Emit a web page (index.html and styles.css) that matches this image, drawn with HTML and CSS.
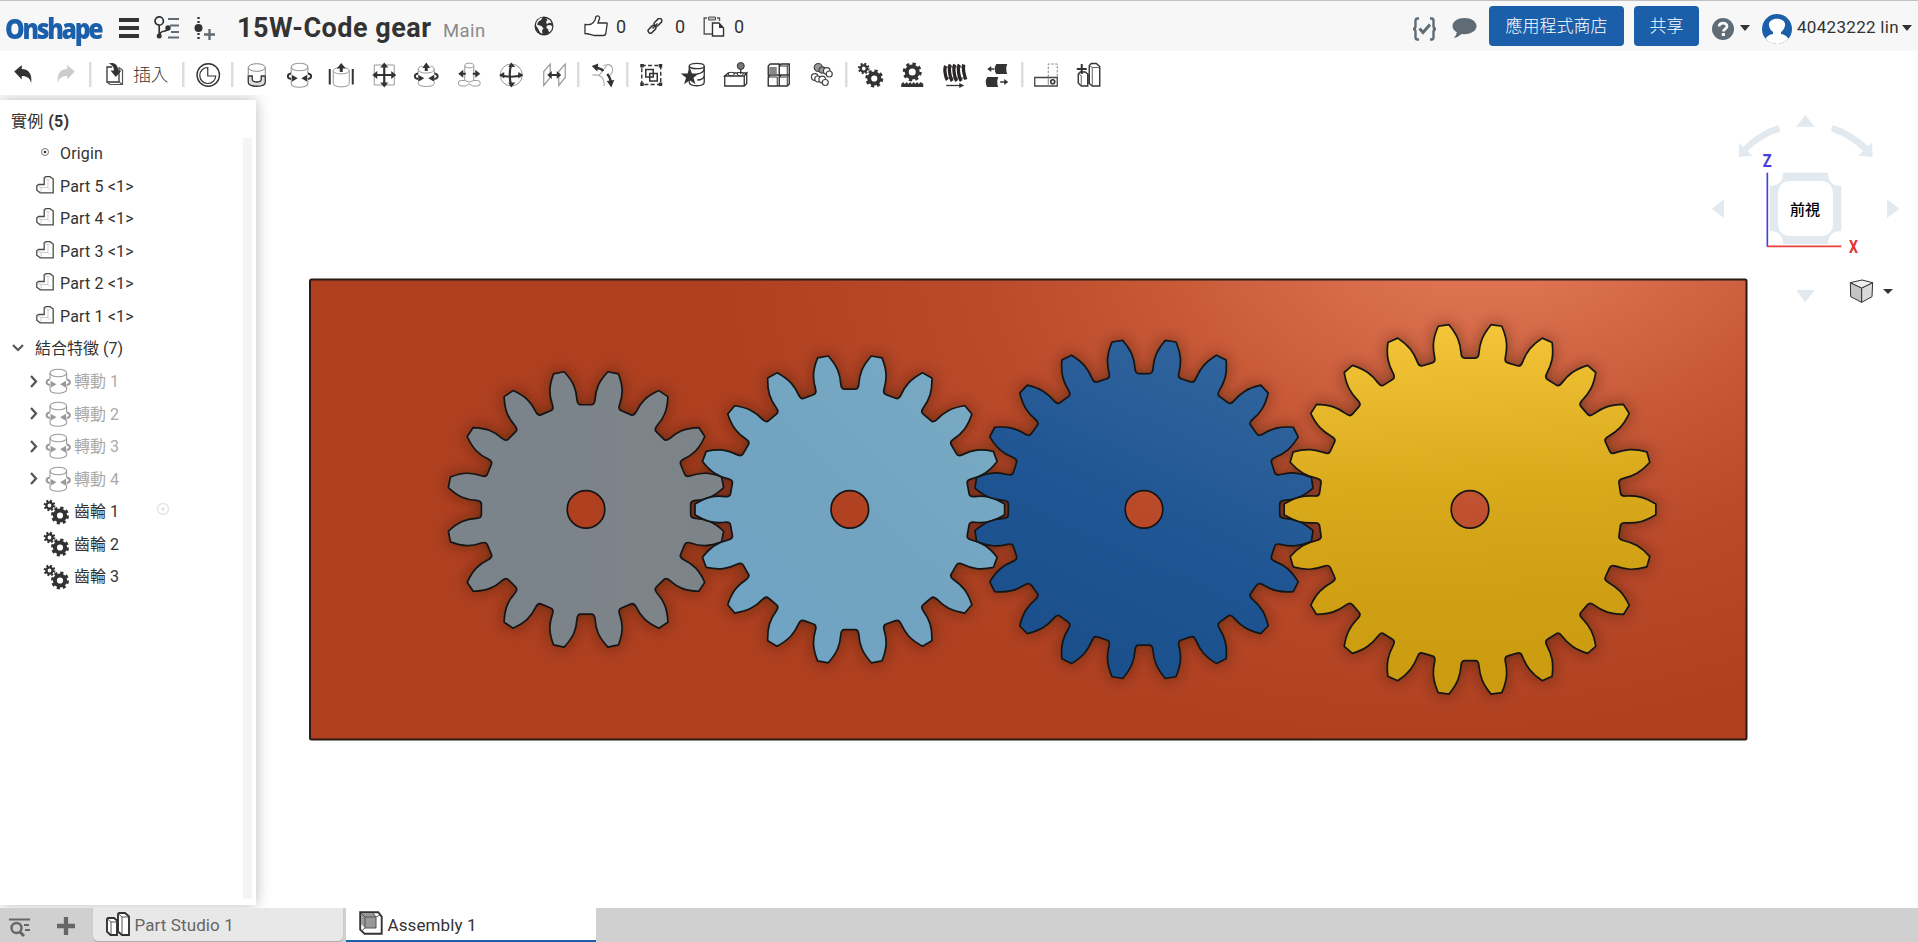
FILE: index.html
```html
<!DOCTYPE html>
<html lang="zh-Hant">
<head>
<meta charset="utf-8">
<title>15W-Code gear</title>
<link rel="stylesheet" href="styles.css">
</head>
<body>
<svg class="defs" width="0" height="0" aria-hidden="true">
  <symbol id="part" viewBox="0 0 18 18"><path d="M.8 9.700 2.500 8.500H8.200V1.800L9.800.7H14l3.200 2.300v13.800H4.200L.8 14.200z" fill="#fff" stroke="#4a4a4a" stroke-width="1.300"/><path d="M9 2l3 2v7.500H5L1.500 10M12 4l2-1M5 11.500V16M12 11.500l2.500 2.500" fill="none" stroke="#bbb" stroke-width=".7"/></symbol>
  <symbol id="revolve" viewBox="0 0 28 28"><g fill="none" stroke="#999" stroke-width="1.100"><ellipse cx="14.300" cy="6" rx="8.300" ry="3.800"/><path d="M6 6v6M22.600 6v6M6 19.500v3c0 5 16.600 5 16.600 0v-3"/></g><path d="M6 12.500c-4.500.5-4.500 5 0 5.500M22.500 12.500c4.500.5 4.500 5 0 5.500" fill="none" stroke="currentColor" stroke-width="2"/><path d="M6.500 13.800v7l6-3.500zM22 13.800v7l-6-3.500z" fill="currentColor"/></symbol>
  <symbol id="gearpair" viewBox="0 0 28 28"><g fill="none" stroke="currentColor"><circle cx="7.500" cy="7.500" r="3.100" stroke-width="2.400"/><circle cx="7.500" cy="7.500" r="4.700" stroke-width="2.300" stroke-dasharray="1.850 1.840"/><circle cx="18" cy="17.500" r="5.100" stroke-width="4"/><circle cx="18" cy="17.500" r="7.500" stroke-width="3" stroke-dasharray="3.100 2.790"/></g></symbol>
</svg>

<header class="header">
  <span class="logo">Onshape</span>
  <svg class="menu" viewBox="0 0 20 20"><path d="M0 2h20M0 10h20M0 18h20" stroke="#333" stroke-width="4"/></svg>
  <svg class="branch" viewBox="0 0 26 24"><path d="M14 3h11M16 9.500h9M17 16h8M14 21.500h11" stroke="#5f6b75" stroke-width="2.200"/><g fill="none" stroke="#333" stroke-width="1.700"><circle cx="5.200" cy="5" r="4.200"/><path d="M5.200 9v11M6 18.500c0-5 7.500-1.500 8-6"/></g><circle cx="5.200" cy="20" r="2.500" fill="#333"/><circle cx="14" cy="12" r="2.700" fill="#333"/></svg>
  <svg class="version" viewBox="0 0 22 24"><path d="M4.500 1v22" stroke="#333" stroke-width="2.300" stroke-dasharray="2 2"/><circle cx="4.500" cy="12" r="4" fill="#333"/><path d="M15.500 13v11M10 18.500h11" stroke="#5f6b75" stroke-width="2.300"/></svg>
  <h1 class="title">15W-Code gear</h1>
  <span class="workspace-name">Main</span>
  <svg class="globe" viewBox="0 0 20 20"><circle cx="10" cy="10" r="9.500" fill="#333"/><path d="M8.500 1.500 7 4 4.500 5.500 3 8.500l2.500 1 2 .5 2 2.500-1.500 2 .5 3.500-2.500-1.500-2-4L2 9.500C2 5 5 2 8.500 1.500zM12 2l4 2.200 1.500 3-2.500-.5-2 1.500-1-2.500 1.500-1.500zM13 9.500l3.500-.5 1.800 1.500-.8 3.500-2.500 2.500-1-3.500-1.800-1z" fill="#f7f7f7"/></svg>
  <svg class="thumb" viewBox="0 0 24 22"><path d="M1 9.500c5 .5 8 0 10-4.500l1-3.500c2-1.500 4 0 3.500 2L14 8h8.500c1 0 .8 1 .5 2l-1.200 8.500c-.3 1.500-1 2-2.500 2h-9C8 20.500 5 18.500 1 18.500z" fill="#fff" stroke="#333" stroke-width="1.300"/></svg>
  <span class="count count-like">0</span>
  <svg class="link" viewBox="0 0 16 16"><g fill="none" stroke="#333" stroke-width="1.500"><rect x="6.500" y="2" width="9" height="4.600" rx="2.300" transform="rotate(-45 11 4.300)"/><rect x=".5" y="9" width="9" height="4.600" rx="2.300" transform="rotate(-45 5 11.300)"/><path d="m5.500 10.500 5-5"/></g></svg>
  <span class="count count-link">0</span>
  <svg class="copy" viewBox="0 0 22 21"><path d="M9 18H1.200V2H4M14 2h2.500v3" fill="none" stroke="#555" stroke-width="1.400"/><path d="M5.500 1h7v3h-7z" fill="#bbb" stroke="#555"/><path d="M9.500 7h6.500l4.500 5v8h-11z" fill="#fff" stroke="#333" stroke-width="1.400"/><path d="M16 7v5h4.500z" fill="#333"/></svg>
  <span class="count">0</span>

  <div class="account">
    <svg class="braces" viewBox="0 0 25 24"><path d="M7 1.500H5.300Q3.500 1.500 3.500 4v5Q3.500 12 1 12q2.500 0 2.500 3v5q0 2.500 1.800 2.500H7M18 1.500h1.700q1.800 0 1.800 2.500v5q0 3 2.500 3-2.500 0-2.500 3v5q0 2.500-1.800 2.500H18" fill="none" stroke="#5f6b75" stroke-width="2.400"/><path d="m7.500 11.500 3.500 4 7-8" fill="none" stroke="#5f6b75" stroke-width="3"/></svg>
    <svg class="bubble" viewBox="0 0 26 22"><path d="M13 .5c7 0 12.500 3.600 12.500 8.500S20 17.500 13 17.500l-3-.2Q6.500 20.500 2 21.500q2.500-2.500 3-6Q.5 13 .5 9C.5 4 6 .5 13 .5z" fill="#5f6b75"/></svg>
    <button class="button store">應用程式商店</button>
    <button class="button share">共享</button>
    <svg class="help" viewBox="0 0 22 22"><circle cx="11" cy="11" r="11" fill="#5f6b75"/><path d="M7.200 8.500C7 4 15 4 15 8.200c0 2.500-3.600 2.700-3.600 5.300" fill="none" stroke="#f7f7f7" stroke-width="2.800"/><path d="M9.800 15h3.200v3H9.800z" fill="#f7f7f7"/></svg>
    <i class="caret"></i>
    <svg class="avatar" viewBox="0 0 30 30"><clipPath id="face"><circle cx="15" cy="15" r="15"/></clipPath><g clip-path="url(#face)"><path fill="#1b5faa" d="M0 0h30v30H0z"/><path d="M2 32c0-9 5-11.500 9-12V18C8 16 6.500 12 7 9.500 8.500 3 21.500 3 23 9.500c.5 2.500-1 6.500-4 8.500v2c4 .5 9 3 9 12z" fill="#fff"/></g></svg>
    <span class="user">40423222 lin</span>
    <i class="caret"></i>
  </div>
</header>

<nav class="toolbar">
  <svg class="tool" viewBox="0 0 28 28"><path d="M5 10.500 12.500 4v4c7 0 10.500 5 9.500 14-1.500-5-4-7-9.500-7v3.500z" fill="#333"/></svg>
  <svg class="tool" viewBox="0 0 28 28"><path d="M22.500 10.500 15 4v4c-7 0-10.500 5-9.500 14 1.500-5 4-7 9.500-7v3.500z" fill="#ccc"/></svg>
  <i class="sep"></i>
  <div class="insert">
    <svg viewBox="0 0 20 24"><path d="M7 5H2v15h12V5.500" fill="#fff" stroke="#333" stroke-width="1.300"/><path d="M14 5.500l3.500 2.500v14.500H5L2 20M14 20l3.500 2.500" fill="none" stroke="#555" stroke-width="1.200"/><path d="M3.500 1.500c5-2 10 1 9.500 7h3.500L10.800 15 5.500 8.500H9C9 5.500 7.500 3 3.500 1.500z" fill="#333"/></svg>
    <span>插入</span>
  </div>
  <i class="sep"></i>
  <svg class="tool" viewBox="0 0 28 28"><g fill="none" stroke="#333" stroke-width="1.400"><circle cx="14" cy="14" r="11.200"/><path d="M13.500 6.500A8 8 0 1 0 21.500 15h-8z" stroke-width="1.200"/></g></svg>
  <i class="sep"></i>
  <svg class="tool" viewBox="0 0 28 28"><path d="M6 15h4v3q0 3 4.500 3t4.500-3v-3h4v6.500c0 5-17 5-17 0z" fill="#ddd" stroke="#333" stroke-width="1.300"/><g fill="none" stroke="#888"><ellipse cx="14.500" cy="6.500" rx="8.500" ry="3.800"/><path d="M6 6.500V15M23 6.500V15"/></g></svg>
  <svg class="tool" viewBox="0 0 28 28"><use href="#revolve"/></svg>
  <svg class="tool" viewBox="0 0 28 28"><path d="M2.500 8v15.500M25.500 8v15.500" stroke="#333" stroke-width="2"/><g fill="none" stroke="#999"><path d="M11 6.700c-7 1-7 6 3 6.200 10-.2 10-5.200 3-6.200M6 9.500V22.500c0 4.500 16 4.500 16 0V9.500"/></g><path d="M14 2l4.500 5.500h-3V11h-3V7.500h-3z" fill="#333"/></svg>
  <svg class="tool" viewBox="0 0 28 28"><path d="M4 4h20v20H4z" fill="none" stroke="#999"/><path d="M14 4v20M4 14h20" stroke="#333" stroke-width="2.200"/><path d="m14 1.500 4 5h-8zM14 26.500l4-5h-8zM2 14l5-4v8zM26 14l-5-4v8z" fill="#333"/></svg>
  <svg class="tool" viewBox="0 0 28 28"><g fill="none" stroke="#999"><path d="M10 5C4 6 4 12 14 12s10-6 4-7M6.500 8l-1 4M21.500 8l1 4M6 21v1.500c0 4 16 4 16 0V21"/></g><path d="m14 1.500 4 5.500h-2.500v3h-3V7H10z" fill="#333"/><path d="M6 12.500c-4.500.5-4.500 5 0 5.500M22 12.500c4.500.5 4.500 5 0 5.500" fill="none" stroke="#333" stroke-width="2"/><path d="M6 13.800v7l6-3.500zM22 13.800v7l-6-3.500z" fill="#333"/></svg>
  <svg class="tool" viewBox="0 0 28 28"><g fill="none" stroke="#999"><ellipse cx="14" cy="4.500" rx="4.500" ry="2.300"/><path d="M9.500 4.500v15q4.500 3 9 0v-15M9.500 19.500H6q-3 0-3 2.700T6 25h5l2-2h2l2 2h5q3 0 3-2.800t-3-2.700h-3.500"/></g><path d="M7 12.700h3.500M17.500 12.700H21" stroke="#333" stroke-width="2"/><path d="m3 12.700 5-4v8zM25 12.700l-5-4v8z" fill="#333"/></svg>
  <svg class="tool" viewBox="0 0 28 28"><circle cx="14" cy="14" r="11" fill="none" stroke="#999"/><path d="M14 3q-3 11 0 22M3 14q11 3.500 22 0" fill="none" stroke="#333" stroke-width="2.200"/><path d="m14 1.500 4 4.500h-7zM14 26.500l4-5h-7zM2 14l5-3v6.500zM26 14l-5-3v6.500z" fill="#333"/></svg>
  <svg class="tool" viewBox="0 0 28 28"><path d="M3.500 10.500 10 3v13.500l-6.500 8zM18.500 10.500 25 3v13.500l-6.500 8z" fill="none" stroke="#999" stroke-width="1.200"/><path d="M9 14h10" stroke="#333" stroke-width="2"/><path d="m7 14 4.500-4v8zM21 14l-4.500-4v8z" fill="#333"/></svg>
  <i class="sep"></i>
  <svg class="tool" viewBox="0 0 28 28"><g fill="none" stroke="#aaa" stroke-width="1.100"><path d="M14 5c8-5 13 4 6 10M3 14c9-1 12 3 12 11M10 14L18 4"/></g><path d="M6 7q6 0 8 3M18 13q4 5 3.500 10" fill="none" stroke="#333" stroke-width="2.300"/><path d="m2.500 5 6.500-2.500-1 8zM22 26.500 17.500 20l7.500-1z" fill="#333"/></svg>
  <i class="sep"></i>
  <svg class="tool" viewBox="0 0 28 28"><path d="M4.500 4.500h19v19h-19z" fill="none" stroke="#333" stroke-width="1.400" stroke-dasharray="4 2.300"/><path d="M3 3h3.500v3.500H3zM21.500 3H25v3.500h-3.500zM3 21.500h3.500V25H3zM21.500 21.500H25V25h-3.500z" fill="#333"/><path d="M12.500 12.500H20V20h-7.500zM8.500 8.500H16V16H8.500z" fill="#fff" stroke="#333" stroke-width="1.500"/></svg>
  <svg class="tool" viewBox="0 0 28 28"><g fill="#fff" stroke="#333" stroke-width="1.300"><path d="M9 5v16c0 5 15 5 15 0V5"/><ellipse cx="16.500" cy="5" rx="7.500" ry="2.700"/><path d="M24 7q0 5-7 6M17 19q6 0 7-4" fill="none"/></g><path d="m9.500 6.500 2.200 6h6.800l-5.300 4.200 2 6.500-5.700-3.900-5.700 3.900 2-6.500L.5 12.500h6.800z" fill="#333"/></svg>
  <svg class="tool" viewBox="0 0 28 28"><path d="M2.500 15 6 12h18.500L22 15zM2.500 15H22v10H2.500zM22 15l2.500-3v10.500L22 25" fill="#fff" stroke="#333" stroke-width="1.300"/><g fill="#fff" stroke="#333"><ellipse cx="9" cy="13" rx="3" ry="1.700"/><ellipse cx="18" cy="13" rx="3" ry="1.700"/></g><circle cx="18.500" cy="5" r="3.500" fill="#777" stroke="#333"/><path d="M18.500 8v5" stroke="#333" stroke-width="1.300"/></svg>
  <svg class="tool" viewBox="0 0 28 28"><g fill="#fff" stroke="#333" stroke-width="1.400"><path d="M3 5 5 3h9v11H3zM14 5l2-2h8v11H14zM3 16l2-2h9v11H3zM14 16l2-2h8v9l-2 2h-8z"/><path d="M14 5h8v9M22 5l2-2M3 16h9v9M14 16h8v9M22 16l2-2" fill="none" stroke-width="1"/></g><path d="M4 6h7.500v7.300H4z" fill="#888"/></svg>
  <svg class="tool" viewBox="0 0 28 28"><g fill="#fff" stroke="#444" stroke-width="1.200"><circle cx="11" cy="6.500" r="4" fill="#999"/><circle cx="15" cy="9" r="3.200" fill="#999"/><circle cx="19.500" cy="10" r="3.300"/><circle cx="22" cy="13" r="3"/><circle cx="7.500" cy="16" r="3.300"/><circle cx="10.500" cy="18" r="3"/><circle cx="15" cy="18.500" r="3.300"/><circle cx="18" cy="21.500" r="3"/></g></svg>
  <i class="sep"></i>
  <svg class="tool" viewBox="0 0 28 28"><use href="#gearpair"/></svg>
  <svg class="tool" viewBox="0 0 28 28"><g fill="none" stroke="#333"><circle cx="14" cy="11" r="5.500" stroke-width="4"/><circle cx="14" cy="11" r="8" stroke-width="3" stroke-dasharray="3.200 3.083"/></g><path d="M3 26v-3l2-2 1.500 2L8.500 21l1.500 2 2-2 1.500 2 2-2 1.500 2 2-2 1.500 2 2-2 2.500 2v3z" fill="#333"/></svg>
  <svg class="tool" viewBox="0 0 28 28"><path d="M4.500 5c-2 3 0 12 1.500 14M9 3.500c-2 4 0 14 2 16.500M13.500 3.500c-2 4 0 14 2 16.500M18 3.500c-2 4 0 14 2 16.500M22.500 3.500c-1 4 1 12 2 15" fill="none" stroke="#2b2426" stroke-width="3.300"/><path d="M3 6h21M4 17h21" stroke="#333"/><path d="M5 24.500h14" stroke="#333" stroke-width="1.300"/><path d="m23 24.500-5-2.500v5z" fill="#333"/></svg>
  <svg class="tool" viewBox="0 0 28 28"><path d="M13 3h11q-2 5 0 10H13q-3-5 0-10zM4 16h11q-2 5 0 10H4q-3-5 0-10z" fill="#333"/><path d="M6 8h5M17 21h5" stroke="#333" stroke-width="1.500"/><path d="m4 8 4-3v6zM25 21l-4-3v6z" fill="#333"/></svg>
  <i class="sep"></i>
  <svg class="tool" viewBox="0 0 28 28"><path d="M16 16V3h9v13" fill="none" stroke="#888" stroke-dasharray="2.500 1.500"/><path d="M2.500 16.500H25V25H2.500z" fill="#fff" stroke="#444" stroke-width="1.300"/><path d="M16 16.500V25" stroke="#888"/><circle cx="20.500" cy="20.700" r="2" fill="none" stroke="#333" stroke-width="1.600"/></svg>
  <svg class="tool" viewBox="0 0 28 28"><path d="M4 13l2-2h5l2.500 2v12H7l-3-3zM15 4.500l2-2h5l3.500 3V25H18l-3-2.500z" fill="#fff" stroke="#333" stroke-width="1.400"/><path d="M4 13l3 1.500V25M15 4.500l3 2V25M18 6.500h7" fill="none" stroke="#666"/><path d="M7.500 3v10M2.500 8h10" stroke="#333" stroke-width="2"/></svg>
</nav>

<div class="workspace">
  <aside class="panel">
    <div class="row heading"><span>實例</span> <b>(5)</b></div>
    <div class="row item"><svg class="origin" viewBox="0 0 18 18"><circle cx="9" cy="9" r="3.500" fill="none" stroke="#777"/><circle cx="9" cy="9" r="1.300" fill="#333"/></svg>Origin</div>
    <div class="row item"><svg viewBox="0 0 18 18"><use href="#part"/></svg>Part 5 &lt;1&gt;</div>
    <div class="row item"><svg viewBox="0 0 18 18"><use href="#part"/></svg>Part 4 &lt;1&gt;</div>
    <div class="row item"><svg viewBox="0 0 18 18"><use href="#part"/></svg>Part 3 &lt;1&gt;</div>
    <div class="row item"><svg viewBox="0 0 18 18"><use href="#part"/></svg>Part 2 &lt;1&gt;</div>
    <div class="row item"><svg viewBox="0 0 18 18"><use href="#part"/></svg>Part 1 &lt;1&gt;</div>
    <div class="row features"><svg viewBox="0 0 12 8"><path d="m1 1 5 5 5-5" fill="none" stroke="#555" stroke-width="2"/></svg>結合特徵 (7)</div>
    <div class="row mate"><svg class="chevron" viewBox="0 0 8 13"><path d="m1 1 5 5.500L1 12" fill="none" stroke="#555" stroke-width="2.300"/></svg><svg class="mate-icon" viewBox="0 0 28 28"><use href="#revolve"/></svg>轉動 1</div>
    <div class="row mate"><svg class="chevron" viewBox="0 0 8 13"><path d="m1 1 5 5.500L1 12" fill="none" stroke="#555" stroke-width="2.300"/></svg><svg class="mate-icon" viewBox="0 0 28 28"><use href="#revolve"/></svg>轉動 2</div>
    <div class="row mate"><svg class="chevron" viewBox="0 0 8 13"><path d="m1 1 5 5.500L1 12" fill="none" stroke="#555" stroke-width="2.300"/></svg><svg class="mate-icon" viewBox="0 0 28 28"><use href="#revolve"/></svg>轉動 3</div>
    <div class="row mate"><svg class="chevron" viewBox="0 0 8 13"><path d="m1 1 5 5.500L1 12" fill="none" stroke="#555" stroke-width="2.300"/></svg><svg class="mate-icon" viewBox="0 0 28 28"><use href="#revolve"/></svg>轉動 4</div>
    <div class="row relation"><svg viewBox="0 0 28 28"><use href="#gearpair"/></svg>齒輪 1<svg class="target" viewBox="0 0 14 14"><circle cx="7" cy="7" r="5.500" fill="none" stroke="#e6e6e6" stroke-width="1.500"/><circle cx="7" cy="7" r="2" fill="#e6e6e6"/></svg></div>
    <div class="row relation"><svg viewBox="0 0 28 28"><use href="#gearpair"/></svg>齒輪 2</div>
    <div class="row relation"><svg viewBox="0 0 28 28"><use href="#gearpair"/></svg>齒輪 3</div>
    <i class="gutter"></i>
  </aside>

  <main class="canvas">
    <svg class="model" viewBox="256 100 1662 808">
      <defs>
        <radialGradient id="orange" gradientUnits="userSpaceOnUse" cx="0" cy="0" r="1" gradientTransform="translate(1500 205) rotate(-8) scale(800 540)"><stop offset="0" stop-color="#e57a56"/><stop offset=".16" stop-color="#dc7250"/><stop offset=".42" stop-color="#c85a38"/><stop offset=".66" stop-color="#b94a2a"/><stop offset="1" stop-color="#ae4020"/></radialGradient>
        <linearGradient id="grey"><stop offset="0" stop-color="#7b838b"/><stop offset="1" stop-color="#7d8489"/></linearGradient>
        <linearGradient id="sky" x1="0" y1="1" x2="1" y2="0"><stop offset="0" stop-color="#70a2c3"/><stop offset=".5" stop-color="#72a4c1"/><stop offset="1" stop-color="#7babc4"/></linearGradient>
        <linearGradient id="navy" x1=".3" y1="1" x2=".75" y2="0"><stop offset="0" stop-color="#1a4f8b"/><stop offset=".45" stop-color="#1e5592"/><stop offset="1" stop-color="#32659f"/></linearGradient>
        <linearGradient id="gold" x1=".45" y1="0" x2=".5" y2="1"><stop offset="0" stop-color="#f4c538"/><stop offset=".45" stop-color="#d9a91c"/><stop offset=".75" stop-color="#cf9f13"/><stop offset="1" stop-color="#cb9b10"/></linearGradient>
        <filter id="soft" x="-20%" y="-20%" width="140%" height="140%"><feGaussianBlur stdDeviation="7.500"/></filter>
      </defs>
      <rect x="310" y="279.500" width="1436.500" height="460" rx="1.500" fill="url(#orange)" stroke="#2b1a14" stroke-width="2"/>
      <g id="shadows" filter="url(#soft)" fill="#28120a" opacity=".55"></g>
      <g id="gears" stroke="#151515" stroke-width="1.700" stroke-linejoin="round"></g>
    </svg>
    <svg class="viewcube" viewBox="0 0 684 660">
      <g fill="#e2e9ef">
        <path d="M346 45 374 80h-55zM346 607l28-37h-55zM65 326l37-28v56zM628 326l-37-28v56z"/>
        <path d="M265 75q-58 18-106 66l-11-13-2 43 41-4-14-14q43-42 99-59zM428 75q58 18 106 64l12-11 2 43-43-4 14-14q-41-40-96-59z"/>
        <path fill-rule="evenodd" d="M279 218H414q0 40 40 40V393q-40 0-40 40H279q0-40-40-40V258q40 0 40-40zM304 243q-40 0-40 40v85q0 40 40 40h85q40 0 40-40v-85q0-40-40-40z"/>
      </g>
      <path d="M232 218V440" stroke="#4540dc" stroke-width="5"/><path d="M231 439H454" stroke="#e8403c" stroke-width="5"/>
      <g transform="translate(218 202) scale(.8 1)"><text class="axis axis-z">Z</text></g>
      <g transform="translate(477 459) scale(.8 1)"><text class="axis axis-x">X</text></g>
      <text x="345" y="345" class="face" text-anchor="middle">前視</text>
      <g stroke="#333" stroke-width="3" stroke-linejoin="round"><path d="m481 548 34 16v43l-33-17z" fill="#c4c4c4"/><path d="m548 548-33 16v43l31-17z" fill="#d9d9d9"/><path d="m481 548 35-8 32 8-33 16z" fill="#eee"/></g>
      <path d="M579 567h30l-15 15z" fill="#333"/>
    </svg>
  </main>
</div>

<footer class="tabs">
  <svg class="search" viewBox="0 0 21 19"><path d="M0 1.500h21M15 7h5M16 12h5" stroke="#666" stroke-width="2"/><circle cx="7.500" cy="10" r="5" fill="none" stroke="#666" stroke-width="2.400"/><path d="m11 14 4 4" stroke="#666" stroke-width="3"/></svg>
  <svg class="plus" viewBox="0 0 18 18"><path d="M9 0v18M0 9h18" stroke="#666" stroke-width="4.300"/></svg>
  <div class="tab">
    <svg viewBox="0 0 24 24"><path d="M1 7l1-1h6l3 2.500V23H4.500L1 19.500zM12 2l1-1h6l4 3.500V23h-7l-4-3.500z" fill="#fff" stroke="#333" stroke-width="1.900"/><path d="M1 6.500l4 3.500V22M5 10h5.500M12 1.500 16 5v17M16 5h6.500" fill="none" stroke="#555"/></svg>
    <span>Part Studio 1</span>
  </div>
  <div class="tab active">
    <svg viewBox="0 0 24 24"><path d="M1.200 1.200h18l3.500 4.500v17H5.500l-4.300-4z" fill="#fff" stroke="#333" stroke-width="1.900"/><path d="M2 2h12l3 4v11H6l-4-4z" fill="#999"/><path d="M2 2l4 4v11M6 6h11v11H6L2.500 20M17 6l4-2M17 6l-3-4" fill="none" stroke="#555"/></svg>
    <span>Assembly 1</span>
  </div>
</footer>
<script src="gears.js"></script>
</body>
</html>
```
FILE: styles.css
```css
* { box-sizing: border-box; }
body {
  margin: 0;
  width: 1918px;
  height: 942px;
  overflow: hidden;
  display: flex;
  flex-direction: column;
  background: #fff;
  color: #333;
  font: 16px/1 Roboto, "Noto Sans CJK TC", sans-serif;
}
svg { display: block; flex: none; }
.defs { position: absolute; }

.header {
  height: 51px;
  flex: none;
  display: flex;
  align-items: center;
  padding: 4px 6px 0 5px;
  border-top: 1px solid #c0c0c0;
  background: #f7f7f7;
  white-space: nowrap;
}
.logo {
  width: 97px;
  margin: -1px 17px 0 0;
  color: #1b5faa;
  font: 800 28px/30px "Open Sans", sans-serif;
  letter-spacing: -2.6px;
  transform: scaleX(.885);
  transform-origin: left;
}
.menu { width: 20px; height: 20px; margin-right: 15px; }
.branch { width: 26px; height: 24px; margin-right: 14px; }
.version { width: 22px; height: 24px; margin-right: 21px; }
.title { width: 196px; margin: -1px 10px 0 0; font-size: 27px; font-weight: 700; line-height: 32px; letter-spacing: .5px; }
.workspace-name { width: 42px; margin-right: 49px; padding-top: 6px; font-size: 18.500px; letter-spacing: .4px; color: #8a8a8a; }
.globe { width: 20px; height: 20px; margin: -4px 30px 0 0; }
.thumb { width: 24px; height: 22px; margin: -4px 8px 0 0; }
.count { width: 11px; margin-top: -2px; font-size: 18px; }
.count-like { margin-right: 20px; }
.link { width: 16px; height: 16px; margin: -4px 12px 0 0; }
.count-link { margin-right: 17px; }
.copy { width: 22px; height: 21px; margin: -4px 9px 0 0; }

.account { margin-left: auto; display: flex; align-items: center; margin-top: -5px; }
.braces { width: 25px; height: 24px; margin: 6px 15px 0 0; }
.bubble { width: 25px; height: 22px; margin: 5px 12px 0 0; }
.button {
  height: 40px;
  padding: 0;
  margin-right: 10px;
  border: 0;
  border-radius: 4px;
  background: #1b5faa;
  color: #fff;
  font: 300 17px/40px Roboto, "Noto Sans CJK TC", sans-serif;
}
.store { width: 135px; }
.share { width: 65px; margin-right: 13px; }
.help { width: 22px; height: 22px; margin: 6px 6px 0 0; }
.caret { border: 5px solid transparent; border-top: 6px solid #333; border-bottom: 0; margin-top: 4px; }
.avatar { width: 30px; height: 30px; margin: 6px 5px 0 12px; }
.user { width: 101px; margin: 3px 4px 0 0; font-size: 17px; letter-spacing: .3px; }

.toolbar { height: 49px; flex: none; display: flex; align-items: center; padding: 0 0 2px 2px; }
.tool { width: 42.5px; height: 28px; }
.sep { width: 6.15px; height: 25px; flex: none; background: linear-gradient(#ddd, #ddd) center / 2.5px 100% no-repeat; }
.insert { width: 87.5px; display: flex; align-items: center; gap: 8px; padding-left: 12px; font-size: 17.5px; font-weight: 300; }
.insert svg { width: 20px; height: 24px; margin-top: -1px; }
.insert span { padding-top: 2px; }

.workspace { height: 808px; flex: none; display: flex; }
.panel {
  position: relative;
  z-index: 1;
  width: 256px;
  height: 805px;
  padding-top: 5.5px;
  background: #fff;
  box-shadow: 0 0 14px rgba(0, 0, 0, .28);
  clip-path: inset(-5px -24px -3px 0);
}
.row { height: 32.54px; display: flex; align-items: center; white-space: pre; letter-spacing: .15px; }
.heading { padding-left: 11px; gap: 5px; }
.heading b { font-weight: 700; }
.item { padding-left: 36px; gap: 6px; }
.item svg { width: 18px; height: 18px; margin-top: -4px; }
.features { padding-left: 12px; gap: 11px; letter-spacing: 0; }
.features svg { width: 12px; height: 8px; margin-top: -3px; }
.mate { padding-left: 30px; color: #aaa; letter-spacing: 0; }
.chevron { width: 8px; height: 13px; margin: -2px 6px 0 0; }
.mate-icon { width: 28px; height: 28px; margin: -2px 2px 0 0; color: #999; }
.relation { padding-left: 42px; letter-spacing: 0; }
.relation svg { width: 28px; height: 28px; margin: -1px 4px 0 0; }
.relation .target { width: 14px; height: 14px; margin: -6px 0 0 37px; }
.gutter { position: absolute; left: 243px; top: 38px; width: 9px; height: 761px; background: #f4f5f7; }

.canvas { position: relative; width: 1662px; height: 808px; }
.model { width: 1662px; height: 808px; }
.viewcube { position: absolute; right: 0; top: 0; width: 228px; height: 220px; }
.axis { font: 700 55px Roboto, sans-serif; }
.axis-z { fill: #4540dc; }
.axis-x { fill: #e03434; font-size: 53px; }
.face { font: 500 45px "Noto Sans CJK TC", sans-serif; fill: #000; }

.tabs { height: 34px; flex: none; display: flex; align-items: flex-start; padding-left: 9px; background: #d0d0d0; }
.search { width: 21px; height: 19px; margin: 10px 27px 0 0; }
.plus { width: 18px; height: 18px; margin: 9px 18px 0 0; }
.tab {
  width: 250px;
  height: 33px;
  margin-right: 3px;
  padding-left: 12.5px;
  display: flex;
  align-items: center;
  gap: 5px;
  background: #e8e8e8;
  border-radius: 0 0 5px 5px;
  box-shadow: 0 1px 1px #aaa;
  color: #666;
  font-size: 17px;
  letter-spacing: .1px;
}
.tab svg { width: 24px; height: 24px; margin-top: -2px; }
.tab span { padding-top: 2px; }
.tab.active { height: 34px; background: #fff; border-bottom: 2px solid #1b5faa; border-radius: 0; box-shadow: none; color: #333; }
```
FILE: gears.js
```js
const MODULE = 15.52;
const HOLE = 18.8;
const gears = [
  { x: 586, teeth: 16, fill: 'grey', phase: 0.5 },
  { x: 849.8, teeth: 18, fill: 'sky', phase: 0 },
  { x: 1144, teeth: 20, fill: 'navy', phase: 0.5 },
  { x: 1470, teeth: 22, fill: 'gold', phase: 0 },
];
const CY = 509.4;

function outline(g) {
  const pitch = MODULE * g.teeth / 2;
  const outer = pitch + MODULE;
  const root = pitch - 1.25 * MODULE;
  const half = Math.PI / g.teeth;
  const baseR = root + 4.5;
  const base = baseR * Math.sin(half) - 8.8;
  let d = '';
  for (let i = 0; i < g.teeth; i++) {
    const a = (i + g.phase) * 2 * half;
    // r runs along the tooth axis, t across it
    const p = (r, t) => {
      const x = g.x + r * Math.cos(a) - t * Math.sin(a);
      const y = CY + r * Math.sin(a) + t * Math.cos(a);
      return x.toFixed(2) + ' ' + y.toFixed(2);
    };
    const polar = (r, ang) => p(r * Math.cos(ang), r * Math.sin(ang));
    const flat = half - 5 / root;
    const corner = half - 8.6 / root;
    d += (i ? 'L' : 'M') + polar(root, -flat);
    d += 'Q' + polar(root, -corner) + ' ' + p(baseR, -base);
    d += 'C' + p(outer - 20, -14) + ' ' + p(outer - 12, -12.6) + ' ' + p(outer - 0.4, -5.4);
    d += 'L' + p(outer - 0.4, 5.4);
    d += 'C' + p(outer - 12, 12.6) + ' ' + p(outer - 20, 14) + ' ' + p(baseR, base);
    d += 'Q' + polar(root, corner) + ' ' + polar(root, flat);
  }
  return d + 'Z';
}

let shadows = '';
let bodies = '';
for (const g of gears) {
  const d = outline(g);
  shadows += `<path d="${d}"/>`;
  bodies += `<path d="${d}" fill="url(#${g.fill})"/>`;
  bodies += `<circle cx="${g.x}" cy="${CY}" r="${HOLE}" fill="url(#orange)"/>`;
}
document.getElementById('shadows').innerHTML = shadows;
document.getElementById('gears').innerHTML = bodies;
```
